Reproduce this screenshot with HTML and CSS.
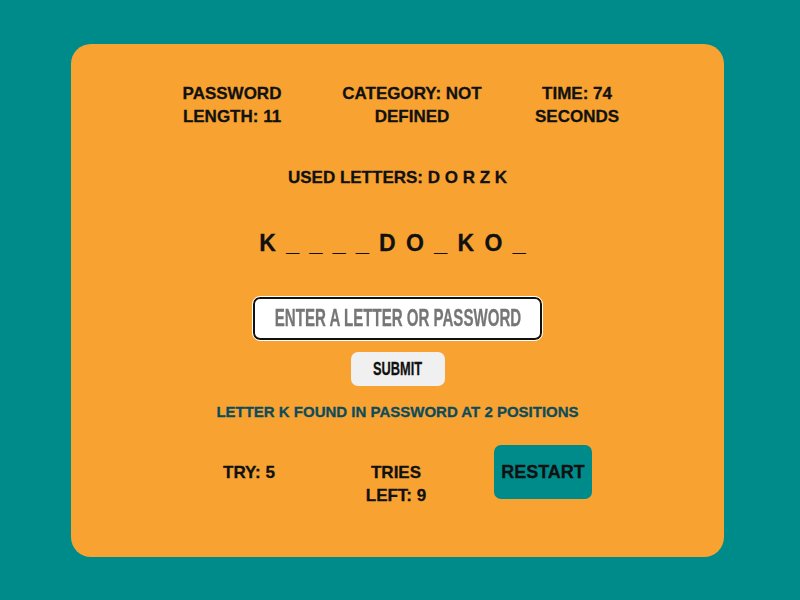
FILE: index.html
```html
<!DOCTYPE html>
<html>
<head>
<meta charset="utf-8">
<link rel="stylesheet" href="styles.css">
</head>
<body>
<div class="card">
  <div class="stats">
    <div class="stat s1">PASSWORD LENGTH: 11</div>
    <div class="stat s2">CATEGORY: NOT DEFINED</div>
    <div class="stat s3">TIME: 74 SECONDS</div>
  </div>
  <div class="used">USED LETTERS: D O R Z K</div>
  <div class="word">K _ _ _ _ D O _ K O _</div>
  <div class="form">
    <div class="field">
      <input class="guess" type="text" placeholder="ENTER A LETTER OR PASSWORD" autofocus>
    </div>
    <button class="submit"><span class="narrow">SUBMIT</span></button>
  </div>
  <div class="msg">LETTER K FOUND IN PASSWORD AT 2 POSITIONS</div>
  <div class="bottom">
    <div class="b1">TRY: 5</div>
    <div class="b2">TRIES LEFT: 9</div>
    <button class="restart">RESTART</button>
  </div>
</div>
</body>
</html>
```
FILE: styles.css
```css
html, body {
  margin: 0;
  padding: 0;
  background: #008b8b;
  height: 100%;
}
body {
  font-family: "Liberation Sans", Arial, sans-serif;
  font-weight: bold;
  color: #111;
  -webkit-text-stroke: 0.3px currentColor;
}
.card {
  box-sizing: border-box;
  width: 653px;
  height: 513px;
  margin: 44px 0 0 71px;
  background: #f8a331;
  border-radius: 20px;
  padding-top: 38px;
  display: flex;
  flex-direction: column;
  align-items: center;
}
.stats {
  align-self: flex-start;
  margin-left: 101px;
  display: flex;
  font-size: 17px;
  line-height: 23px;
  text-align: center;
}
.s1 { width: 120px; }
.s2 { width: 150px; margin-left: 45px; }
.s3 { width: 90px; margin-left: 45px; }
.used {
  margin-top: 38px;
  font-size: 17px;
  line-height: 23px;
}
.word {
  margin-top: 41px;
  margin-right: 8px;
  font-size: 23px;
  letter-spacing: 2px;
}
.form {
  margin-top: 40px;
  display: flex;
  flex-direction: column;
  align-items: center;
}
.field {
  box-sizing: border-box;
  width: 289px;
  height: 43px;
  border: 2px solid #111;
  border-radius: 7px;
  background: #fff;
  outline: 1px solid #fff;
  display: flex;
  justify-content: center;
  align-items: center;
}
.guess {
  flex: none;
  width: 400px;
  height: 36px;
  padding: 0;
  border: none;
  outline: none;
  background: transparent;
  transform: scaleX(0.655);
  font-family: "Liberation Sans", Arial, sans-serif;
  font-weight: bold;
  font-size: 23px;
  text-align: center;
  color: #111;
  caret-color: #111;
}
.guess::placeholder { color: #767676; }
.submit {
  margin-top: 12px;
  width: 94px;
  height: 34px;
  border: none;
  border-radius: 7px;
  background: #f0f0f0;
  font-family: "Liberation Sans", Arial, sans-serif;
  font-weight: bold;
  font-size: 18px;
  color: #111;
  padding: 0;
  display: flex;
  justify-content: center;
  align-items: center;
}
.narrow {
  display: inline-block;
  transform: scaleX(0.71);
}
.msg {
  margin-top: 17px;
  font-size: 15px;
  color: #0d4b5b;
}
.bottom {
  align-self: flex-start;
  margin-left: 138px;
  margin-top: 25px;
  display: flex;
  align-items: flex-start;
  font-size: 17px;
  line-height: 23px;
  text-align: center;
}
.b1 { width: 80px; margin-top: 16px; }
.b2 { width: 80px; margin-left: 67px; margin-top: 16px; }
.restart {
  margin-left: 58px;
  width: 98px;
  height: 54px;
  border: none;
  border-radius: 7px;
  background: #008b8b;
  font-family: "Liberation Sans", Arial, sans-serif;
  font-weight: bold;
  font-size: 18px;
  color: #111;
  -webkit-text-stroke: 0.3px #111;
}
```
